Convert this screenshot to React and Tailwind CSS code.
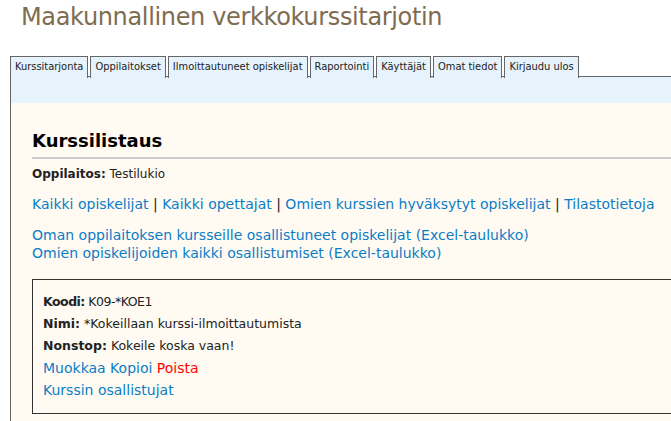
import React from "react";

const tabs = [
  "Kurssitarjonta",
  "Oppilaitokset",
  "Ilmoittautuneet opiskelijat",
  "Raportointi",
  "Käyttäjät",
  "Omat tiedot",
  "Kirjaudu ulos",
];

export default function App() {
  return (
    <div className="w-[671px] h-[421px] overflow-hidden bg-white text-[#222]" style={{ fontFamily: '"DejaVu Sans", Verdana, sans-serif' }}>
      <h1 className="pl-[21px] pt-[3px] h-[56px] text-[24px] leading-[28px] tracking-[-0.35px] text-[#7f6c50] font-normal">
        Maakunnallinen verkkokurssitarjotin
      </h1>
      <div className="pl-[10px]">
        <div className="flex gap-[2px] border-b border-[#666] h-[21px]">
          {tabs.map((t) => (
            <div
              key={t}
              className="relative -mb-px h-[22px] border-t border-l border-r border-[#666] bg-[#e6f3fc] px-[4px] pt-[3px] text-[11px] leading-[14px] text-[#222] whitespace-nowrap font-stretch-condensed"
              style={{ fontFamily: '"DejaVu Sans Condensed", "DejaVu Sans", sans-serif' }}
            >
              {t}
            </div>
          ))}
        </div>
        <div className="border-l border-[#666]">
          <div className="h-[26px] bg-[#e6f3fc]" />
          <div className="bg-[#fffbf3] pl-[21px] pt-[27px] pb-[20px] text-[12px]">
            <h2 className="border-b-2 border-[#cccccc] pb-[5px] text-[18px] leading-[22px] font-bold text-black">
              Kurssilistaus
            </h2>
            <p className="mt-[6px] leading-[18px]">
              <b>Oppilaitos:</b> Testilukio
            </p>
            <p className="mt-[12px] text-[14px] leading-[18px] text-[#0a7dc6]">
              <span>Kaikki opiskelijat</span> <span className="text-[#222]">|</span>{" "}
              <span>Kaikki opettajat</span> <span className="text-[#222]">|</span>{" "}
              <span>Omien kurssien hyväksytyt opiskelijat</span> <span className="text-[#222]">|</span>{" "}
              <span>Tilastotietoja</span>
            </p>
            <div className="mt-[13px] text-[14px] leading-[18px] text-[#0a7dc6]">
              <div>Oman oppilaitoksen kursseille osallistuneet opiskelijat (Excel-taulukko)</div>
              <div>Omien opiskelijoiden kaikki osallistumiset (Excel-taulukko)</div>
            </div>
            <div className="mt-[17px] w-[700px] border border-[#333] pl-[10px] pt-[11px] pb-[12px] text-[12.5px] leading-[22px]">
              <div className="tracking-[-0.5px]"><b>Koodi:</b> K09-*KOE1</div>
              <div><b>Nimi:</b> *Kokeillaan kurssi-ilmoittautumista</div>
              <div><b>Nonstop:</b> Kokeile koska vaan!</div>
              <div className="text-[14px] text-[#0a7dc6]">
                Muokkaa Kopioi <span className="text-[#ff0000]">Poista</span>
              </div>
              <div className="text-[14px] text-[#0a7dc6]">Kurssin osallistujat</div>
            </div>
          </div>
        </div>
      </div>
    </div>
  );
}
